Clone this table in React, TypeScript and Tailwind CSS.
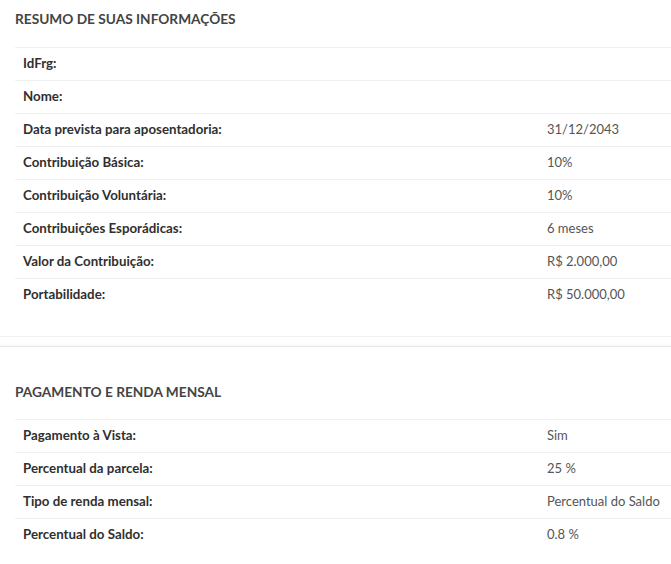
type Row = { label: string; value?: string };

const resumo: Row[] = [
  { label: 'IdFrg:' },
  { label: 'Nome:' },
  { label: 'Data prevista para aposentadoria:', value: '31/12/2043' },
  { label: 'Contribuição Básica:', value: '10%' },
  { label: 'Contribuição Voluntária:', value: '10%' },
  { label: 'Contribuições Esporádicas:', value: '6 meses' },
  { label: 'Valor da Contribuição:', value: 'R$ 2.000,00' },
  { label: 'Portabilidade:', value: 'R$ 50.000,00' },
];

const pagamento: Row[] = [
  { label: 'Pagamento à Vista:', value: 'Sim' },
  { label: 'Percentual da parcela:', value: '25 %' },
  { label: 'Tipo de renda mensal:', value: 'Percentual do Saldo' },
  { label: 'Percentual do Saldo:', value: '0.8 %' },
];

function InfoTable({ rows }: { rows: Row[] }) {
  return (
    <div className="ml-[15px]">
      {rows.map((row, i) => (
        <div key={i} className="grid grid-cols-[524px_1fr] h-[33px] items-center border-t border-[#f0f0f0]">
          <div className="pl-2 font-bold text-[13.3px] text-[#2f2f2f]">{row.label}</div>
          <div className="pl-2 text-[13px] text-[#555]">{row.value}</div>
        </div>
      ))}
    </div>
  );
}

export default function App() {
  return (
    <div className="w-[671px] h-[564px] overflow-hidden bg-white font-['Lato',sans-serif]">
      <section className="pb-[25px] border-b border-[#f0f0f0]">
        <h2 className="pl-[15px] h-[47px] pt-[9px] text-[13.7px] font-bold text-[#444]">RESUMO DE SUAS INFORMAÇÕES</h2>
        <InfoTable rows={resumo} />
      </section>

      <section className="mt-[9px] border-t border-[#e8e8e8] shadow-[0_-1px_3px_rgba(0,0,0,0.04)]">
        <h2 className="pl-[15px] h-[72px] pt-[35px] text-[13.7px] font-bold text-[#444]">PAGAMENTO E RENDA MENSAL</h2>
        <InfoTable rows={pagamento} />
      </section>
    </div>
  );
}
